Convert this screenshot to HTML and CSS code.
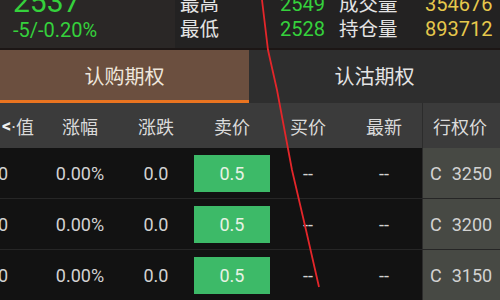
FILE: index.html
```html
<!DOCTYPE html>
<html lang="zh-CN">
<head>
  <meta charset="UTF-8" />
  <title>期权</title>
  <link rel="stylesheet" href="styles.css">
</head>
<body>
  <div class="quote">
    <div class="price">
      <div class="last">2537</div>
      <div class="change">-5/-0.20%</div>
    </div>
    <div class="stats">
      <span class="label">最高</span><span class="num up">2549</span><span class="label">成交量</span><span class="num gold">354676</span>
      <span class="label">最低</span><span class="num up">2528</span><span class="label">持仓量</span><span class="num gold">893712</span>
    </div>
  </div>

  <div class="tabs">
    <div class="tab active">认购期权</div>
    <div class="tab">认沽期权</div>
  </div>

  <div class="table">
    <div class="row head">
      <div class="cell first"><b class="back">&lt;</b>·值</div>
      <div class="cell">涨幅</div>
      <div class="cell">涨跌</div>
      <div class="cell">卖价</div>
      <div class="cell">买价</div>
      <div class="cell">最新</div>
      <div class="cell strike">行权价</div>
    </div>
    <div class="row">
      <div class="cell first gold"><span>1.20</span></div>
      <div class="cell">0.00%</div>
      <div class="cell">0.0</div>
      <div class="cell"><span class="ask">0.5</span></div>
      <div class="cell">--</div>
      <div class="cell">--</div>
      <div class="cell strike"><span class="cp">C</span>3250</div>
    </div>
    <div class="row">
      <div class="cell first gold"><span>1.20</span></div>
      <div class="cell">0.00%</div>
      <div class="cell">0.0</div>
      <div class="cell"><span class="ask">0.5</span></div>
      <div class="cell">--</div>
      <div class="cell">--</div>
      <div class="cell strike"><span class="cp">C</span>3200</div>
    </div>
    <div class="row">
      <div class="cell first gold"><span>1.20</span></div>
      <div class="cell">0.00%</div>
      <div class="cell">0.0</div>
      <div class="cell"><span class="ask">0.5</span></div>
      <div class="cell">--</div>
      <div class="cell">--</div>
      <div class="cell strike"><span class="cp">C</span>3150</div>
    </div>
  </div>

  <svg class="mark" width="500" height="300" viewBox="0 0 500 300">
    <polyline points="262,0 268,50 277,90 292,170 306,230 319,287" fill="none" stroke="#e3262a" stroke-width="1.8"/>
  </svg>
</body>
</html>
```

FILE: styles.css
```css
:root {
  --bg: #121212;
  --up: #35d13c;
  --gold: #e6c84c;
  --text: #dcdcdc;
  --tab: #6b4f3f;
  --orange: #ea7420;
  --head: #3b3b3b;
  --strike: #474944;
}
* { box-sizing: border-box; }
body {
  margin: 0;
  width: 500px; height: 300px;
  overflow: hidden;
  background: var(--bg);
  color: var(--text);
  font-family: Roboto, "Noto Sans CJK SC", sans-serif;
  position: relative;
}

.quote {
  height: 50px;
  display: flex;
  overflow: hidden;
  border-bottom: 2px solid #1c1615;
}
.price {
  width: 175px;
  background: #2a2726;
  padding-left: 13px;
}
.last { font-size: 30px; line-height: 30px; margin-top: -13px; color: var(--up); }
.change { font-size: 20px; line-height: 26px; color: var(--up); }
.stats {
  flex: 1;
  background: #232222;
  display: grid;
  grid-template-columns: 100px 59px 86px auto;
  grid-auto-rows: 25px;
  padding-left: 5px;
  align-content: start;
  position: relative;
  top: -8px;
  height: 58px;
  font-size: 19.5px;
  line-height: 25px;
}
.label { color: #e4e4e4; }
.num { font-size: 20px; }
.up { color: var(--up); }
.gold { color: var(--gold); }

.tabs {
  display: flex;
  height: 53px;
}
.tab {
  flex: 1;
  display: flex; align-items: center; justify-content: center;
  background: #2e2e2e;
  font-size: 20px;
  color: #e4e4e4;
  padding-bottom: 3px;
}
.tab.active {
  flex: 0 0 249px;
  background: var(--tab);
  border-bottom: 3px solid var(--orange);
  padding-bottom: 0;
  color: #eee6dc;
}

.row {
  display: flex;
  height: 51px;
  border-bottom: 1px solid #262626;
}
.row.head {
  height: 45px;
  background: var(--head);
  border-bottom: none;
}
.cell {
  width: 76px;
  display: flex; align-items: center; justify-content: center;
  font-size: 18px;
  color: #d2d2d2;
}
.head .cell { color: #dadada; }
.cell.first {
  width: 42px;
  justify-content: flex-start;
  overflow: hidden;
}
.head .cell.first { padding-left: 2px; }
.back { font-weight: 700; color: #f0f0f0; }
.row:not(.head) .cell.first span { margin-left: -27px; }
.cell.strike {
  flex: 1;
  width: auto;
  background: var(--strike);
  border-left: 1px solid #2c2c2c;
  justify-content: flex-start;
  padding-left: 7px;
}
.head .cell.strike { background: var(--head); padding-left: 10px; }
.cp { margin-right: 10px; }
.ask {
  width: 77px; height: 37px;
  background: #3dba68;
  color: #e8f2e4;
  display: flex; align-items: center; justify-content: center;
}

.mark {
  position: absolute;
  left: 0; top: 0;
  pointer-events: none;
}
```
